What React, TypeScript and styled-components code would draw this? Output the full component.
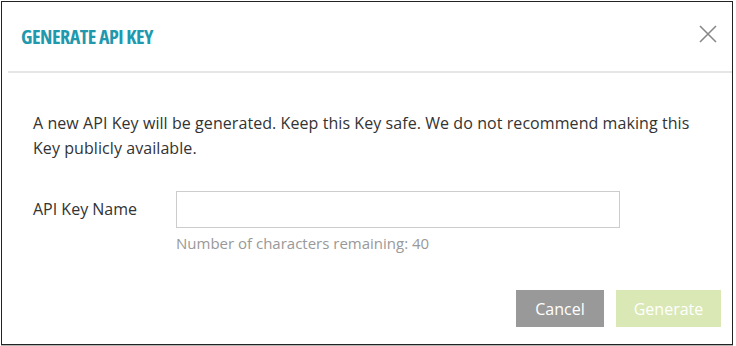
import React from "react";
import styled, { createGlobalStyle } from "styled-components";

const Global = createGlobalStyle`
  html, body { margin: 0; padding: 0; background: #ffffff; }
  body { font-family: "Open Sans", "Noto Sans", sans-serif; }
  * { box-sizing: border-box; }
`;

const Page = styled.div`
  padding: 1px;
`;

const Dialog = styled.div`
  width: 732px;
  height: 344px;
  border: 1px solid #222;
  box-shadow: 0 1px 0 #b5b5b5;
  background: #fff;
  display: flex;
  flex-direction: column;
`;

const Header = styled.div`
  height: 69px;
  display: flex;
  align-items: center;
  justify-content: space-between;
  padding: 0 14px 0 19px;
`;

const Title = styled.h2`
  margin: 0;
  font-family: "Open Sans", sans-serif;
  font-weight: 700;
  font-stretch: 75%;
  font-size: 20px;
  line-height: 1;
  color: #2099ae;
  letter-spacing: -0.5px;
`;

const CloseButton = styled.button`
  border: none;
  background: none;
  padding: 0;
  width: 20px;
  height: 20px;
  margin-bottom: 6px;
  display: flex;
  align-items: center;
  justify-content: center;
  cursor: pointer;
`;

const Divider = styled.div`
  height: 2px;
  margin-left: 6px;
  background: #e6e6e6;
`;

const Body = styled.div`
  padding: 38px 31px 0 31px;
  flex: 1;
  display: flex;
  flex-direction: column;
`;

const Intro = styled.p`
  margin: 0;
  font-size: 16px;
  line-height: 25px;
  letter-spacing: 0.07px;
  color: #333;
`;

const FormRow = styled.div`
  margin-top: 30px;
  display: grid;
  grid-template-columns: 143px 444px;
  row-gap: 5px;
  align-items: center;
`;

const Label = styled.label`
  font-size: 16px;
  color: #333;
  line-height: 20px;
  padding-bottom: 2px;
`;

const Input = styled.input`
  height: 37px;
  width: 444px;
  border: 1px solid #cccccc;
  padding: 0 10px;
  font-family: inherit;
  font-size: 15px;
  outline: none;
`;

const Helper = styled.div`
  grid-column: 2;
  font-size: 15px;
  line-height: 20px;
  color: #999;
`;

const Footer = styled.div`
  margin-top: auto;
  display: flex;
  justify-content: flex-end;
  gap: 12px;
  padding: 0 11px 17px 0;
`;

const Button = styled.button<{ $variant: "cancel" | "primary" }>`
  height: 37px;
  border: none;
  padding: 0;
  width: ${(p) => (p.$variant === "cancel" ? "88px" : "105px")};
  background: ${(p) => (p.$variant === "cancel" ? "#999999" : "#d9e8b5")};
  color: #fff;
  font-family: "Open Sans", sans-serif;
  font-size: 16px;
  cursor: pointer;
`;

export default function App() {
  return (
    <>
      <Global />
      <Page>
        <Dialog>
          <Header>
            <Title>GENERATE API KEY</Title>
            <CloseButton aria-label="Close">
              <svg width="18" height="18" viewBox="0 0 18 18">
                <path d="M1 1 L17 17 M17 1 L1 17" stroke="#888" strokeWidth="1.6" />
              </svg>
            </CloseButton>
          </Header>
          <Divider />
          <Body>
            <Intro>
              A new API Key will be generated. Keep this Key safe. We do not recommend making this
              Key publicly available.
            </Intro>
            <FormRow>
              <Label htmlFor="keyname">API Key Name</Label>
              <Input id="keyname" type="text" />
              <Helper>Number of characters remaining: 40</Helper>
            </FormRow>
          </Body>
          <Footer>
            <Button $variant="cancel">Cancel</Button>
            <Button $variant="primary" disabled>
              Generate
            </Button>
          </Footer>
        </Dialog>
      </Page>
    </>
  );
}
